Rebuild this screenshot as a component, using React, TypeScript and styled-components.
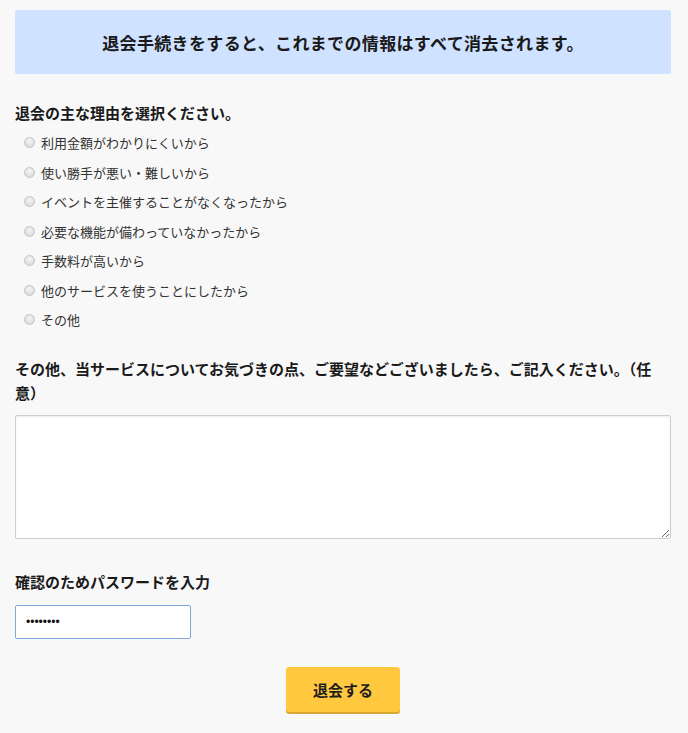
import React from "react";
import styled, { createGlobalStyle } from "styled-components";

const Global = createGlobalStyle`
  html, body { margin: 0; padding: 0; background: #f8f8f8; }
  body { font-family: "Noto Sans CJK JP", "Noto Sans", sans-serif; color: #222; }
  * { box-sizing: border-box; }
`;

const Page = styled.div`
  padding: 10px 17px 20px 15px;
`;

const Banner = styled.div`
  background: #cfe2ff;
  border-radius: 2px;
  height: 64px;
  display: flex;
  align-items: center;
  justify-content: center;
  font-size: 17px;
  letter-spacing: 0.35px;
  font-weight: 700;
  color: #1a1a1a;
`;

const Heading = styled.h2<{ $top: number }>`
  margin: ${(p) => p.$top}px 0 0;
  font-size: 15px;
  font-weight: 700;
  line-height: 24px;
  color: #1a1a1a;
`;

const RadioList = styled.div`
  display: flex;
  flex-direction: column;
  margin-top: 3px;
  padding-left: 9px;
`;

const RadioRow = styled.label`
  display: flex;
  align-items: center;
  gap: 6px;
  height: 29.5px;
  font-size: 13px;
  color: #333;
`;

const Radio = styled.input`
  appearance: none;
  margin: 0;
  width: 11px;
  height: 11px;
  border-radius: 50%;
  border: 1px solid #c4c4c4;
  background: radial-gradient(circle at 50% 35%, #f4f4f4 0%, #dedede 70%, #d2d2d2 100%);
  flex: none;
`;

const TextArea = styled.textarea`
  display: block;
  width: 100%;
  height: 124px;
  margin-top: 10px;
  border: 1px solid #cfcfcf;
  border-radius: 2px;
  box-shadow: inset 0 1px 2px rgba(0, 0, 0, 0.08);
  background: #fff;
  font-family: inherit;
  font-size: 13px;
`;

const PasswordInput = styled.input`
  display: block;
  width: 176px;
  height: 34px;
  margin-top: 11px;
  padding: 0 9px 0 10px;
  border: 1px solid #7fa7d9;
  border-radius: 2px;
  background: #fff;
  font-family: "Liberation Sans", sans-serif;
  font-size: 12px;
  color: #111;
  outline: none;
`;

const ButtonRow = styled.div`
  display: flex;
  justify-content: center;
  margin-top: 28px;
`;

const SubmitButton = styled.button`
  width: 114px;
  height: 45px;
  border: none;
  border-radius: 3px;
  background: #ffc83e;
  box-shadow: 0 2px 0 #d7a733;
  font-family: inherit;
  font-size: 15px;
  font-weight: 700;
  color: #1f1f1f;
  cursor: pointer;
`;

const reasons = [
  "利用金額がわかりにくいから",
  "使い勝手が悪い・難しいから",
  "イベントを主催することがなくなったから",
  "必要な機能が備わっていなかったから",
  "手数料が高いから",
  "他のサービスを使うことにしたから",
  "その他",
];

export default function App() {
  return (
    <>
      <Global />
      <Page>
        <Banner>退会手続きをすると、これまでの情報はすべて消去されます。</Banner>
        <Heading $top={27}>退会の主な理由を選択ください。</Heading>
        <RadioList>
          {reasons.map((r) => (
            <RadioRow key={r}>
              <Radio type="radio" name="reason" />
              {r}
            </RadioRow>
          ))}
        </RadioList>
        <Heading $top={22}>
          その他、当サービスについてお気づきの点、ご要望などございましたら、ご記入ください。（任意）
        </Heading>
        <TextArea />
        <Heading $top={31}>確認のためパスワードを入力</Heading>
        <PasswordInput type="text" readOnly value="••••••••" />
        <ButtonRow>
          <SubmitButton>退会する</SubmitButton>
        </ButtonRow>
      </Page>
    </>
  );
}
